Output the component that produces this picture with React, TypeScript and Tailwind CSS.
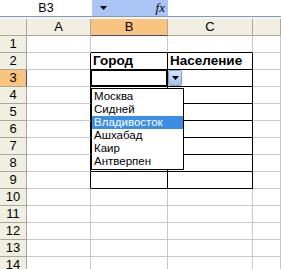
import React from 'react';

const font = { fontFamily: '"Liberation Sans", Arial, sans-serif' };

const items = ['Москва', 'Сидней', 'Владивосток', 'Ашхабад', 'Каир', 'Антверпен'];
const rows = Array.from({ length: 14 }, (_, i) => i + 1);

function Cell({ row, col }: { row: number; col: number }) {
  // col: 0=A 1=B 2=C 3=D
  const inTable = row >= 2 && row <= 9;
  let cls = 'border-r border-b border-[#c8c8c8] bg-white';
  if (col === 0 && inTable) cls = 'border-r border-b border-b-[#c8c8c8] border-r-black bg-white';
  if ((col === 1 || col === 2) && row === 1) cls = 'border-r border-b border-r-[#c8c8c8] border-b-black bg-white';
  if ((col === 1 || col === 2) && inTable) cls = 'border-r border-b border-black bg-white';
  let text: React.ReactNode = null;
  if (row === 2 && col === 1) text = 'Город';
  if (row === 2 && col === 2) text = 'Население';
  return (
    <div className={`${cls} text-[13.5px] font-bold text-black leading-[16px] pl-[2px] overflow-hidden whitespace-nowrap`}>
      {text}
    </div>
  );
}

export default function App() {
  return (
    <div className="w-[281px] h-[269px] overflow-hidden bg-white select-none" style={font}>
      {/* Formula bar */}
      <div className="flex h-[17px] border-b border-[#7f9db9]">
        <div className="w-[92px] bg-white flex items-center justify-center text-[12.5px] text-black">B3</div>
        <div className="w-[76px] bg-[#a9c4f5] flex items-center justify-between pl-[8px] pr-[3px]">
          <svg width="7" height="4" viewBox="0 0 7 4"><path d="M0 0h7L3.5 4z" fill="#000" /></svg>
          <span className="italic text-[13px] text-black" style={{ fontFamily: '"Liberation Serif", serif' }}>fx</span>
        </div>
        <div className="flex-1 bg-white" />
      </div>
      <div className="h-[2px] bg-[#f4f2ec]" />

      {/* Sheet */}
      <div className="relative">
        <div className="grid grid-cols-[27px_64px_77px_85px_1fr] auto-rows-[17px]">
          {/* header row */}
          <div className="bg-[#f1efe2] border-r border-b border-[#aca899]" />
          {['A', 'B', 'C', ''].map((c, i) => (
            <div
              key={i}
              className={`flex items-center justify-center text-[13px] text-black border-r border-b ${
                c === 'B'
                  ? 'bg-[#f9c47f] border-r-[#aca899] border-b-[#4b4b6f]'
                  : 'bg-[#f1efe2] border-[#aca899]'
              }`}
            >
              {c}
            </div>
          ))}
          {rows.map((r) => (
            <React.Fragment key={r}>
              <div
                className={`flex items-center justify-center text-[13px] text-black border-r border-b ${
                  r === 3 ? 'bg-[#f9c47f] border-r-[#4b4b6f] border-b-[#aca899]' : 'bg-[#f1efe2] border-[#aca899]'
                }`}
              >
                {r}
              </div>
              {[0, 1, 2, 3].map((c) => (
                <Cell key={c} row={r} col={c} />
              ))}
            </React.Fragment>
          ))}
        </div>

        {/* active cell B3 */}
        <div className="absolute left-[90px] top-[50px] w-[78px] h-[18px] border-2 border-black" />

        {/* in-cell dropdown button */}
        <div className="absolute left-[168px] top-[51px] w-[14px] h-[16px] rounded-[2px] border border-[#7f9db9] bg-gradient-to-b from-[#d6e5fa] to-[#9fc0ee] flex items-center justify-center">
          <svg width="7" height="4" viewBox="0 0 7 4"><path d="M0 0h7L3.5 4z" fill="#000" /></svg>
        </div>

        {/* dropdown list */}
        <div className="absolute left-[91px] top-[69px] w-[93px] border border-black bg-white py-[1px]">
          {items.map((it) => (
            <div
              key={it}
              className={`h-[13px] leading-[13px] text-[11.5px] pl-[2px] ${
                it === 'Владивосток' ? 'bg-[#3a8ee6] text-white' : 'text-black'
              }`}
            >
              {it}
            </div>
          ))}
        </div>
      </div>
    </div>
  );
}
